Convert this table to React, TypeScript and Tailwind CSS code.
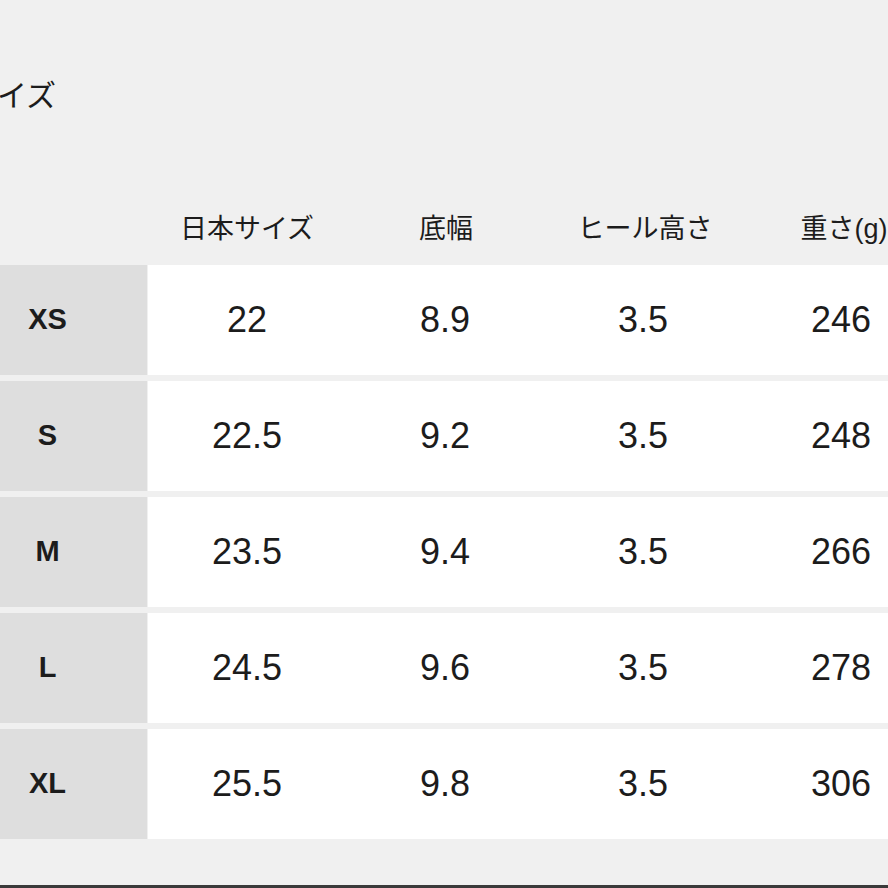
import React from 'react';

const rows = [
  { size: 'XS', jp: '22', width: '8.9', heel: '3.5', weight: '246' },
  { size: 'S', jp: '22.5', width: '9.2', heel: '3.5', weight: '248' },
  { size: 'M', jp: '23.5', width: '9.4', heel: '3.5', weight: '266' },
  { size: 'L', jp: '24.5', width: '9.6', heel: '3.5', weight: '278' },
  { size: 'XL', jp: '25.5', width: '9.8', heel: '3.5', weight: '306' },
];

const headers = ['日本サイズ', '底幅', 'ヒール高さ', '重さ(g)'];

const App: React.FC = () => {
  return (
    <div
      className="relative h-[888px] w-[888px] overflow-hidden bg-[#f0f0f0] text-[#1c1c1c]"
      style={{ fontFamily: '"Liberation Sans", "Noto Sans CJK JP", sans-serif' }}
    >
      <div className="pt-[76px] h-[200px]">
        <h2 className="ml-[-33px] text-[30px] leading-[40px] whitespace-nowrap">サイズ</h2>
      </div>

      <div className="ml-[-52px] w-[992px]">
        {/* header */}
        <div className="grid grid-cols-[199px_198px_198px_198px_198px] gap-x-px h-[65px] items-center pb-[6px]">
          <div />
          {headers.map(h => (
            <div key={h} className="text-center text-[27px] leading-none whitespace-nowrap">
              {h}
            </div>
          ))}
        </div>

        {/* rows */}
        <div className="flex flex-col gap-[6px]">
          {rows.map(r => (
            <div
              key={r.size}
              className="grid grid-cols-[199px_792px] gap-x-px h-[110px]"
            >
              <div className="bg-[#dedede] flex items-center justify-center text-[29px] font-bold">
                {r.size}
              </div>
              <div className="bg-white grid grid-cols-4 items-center text-center text-[36px]">
                <div>{r.jp}</div>
                <div>{r.width}</div>
                <div>{r.heel}</div>
                <div>{r.weight}</div>
              </div>
            </div>
          ))}
        </div>
      </div>

      <div className="absolute bottom-0 left-0 right-0 h-[3px] bg-[#3a3a3a]" />
    </div>
  );
};

export default App;
